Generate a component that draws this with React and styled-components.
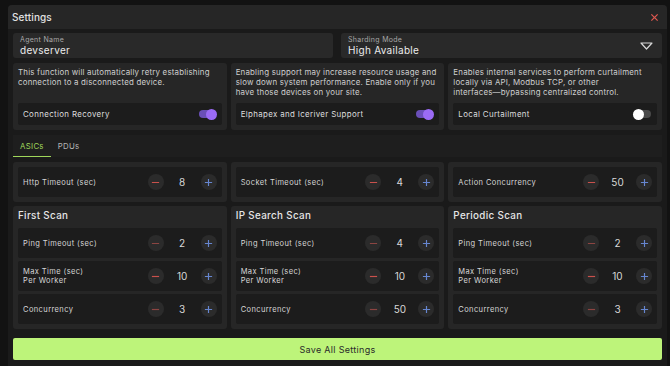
import styled, { createGlobalStyle } from 'styled-components'

const GlobalStyle = createGlobalStyle`
    html, body {
        margin: 0;
        padding: 0;
        background: #121212;
        font-family: Inter, "Noto Sans", "Liberation Sans", sans-serif;
        -webkit-font-smoothing: antialiased;
    }
`

const infoCards = [
    {
        text: 'This function will automatically retry establishing connection to a disconnected device.',
        label: 'Connection Recovery',
        on: true,
    },
    {
        text: 'Enabling support may increase resource usage and slow down system performance. Enable only if you have those devices on your site.',
        label: 'Elphapex and Iceriver Support',
        on: true,
    },
    {
        text: 'Enables internal services to perform curtailment locally via API, Modbus TCP, or other interfaces\u2060\u2014\u2060bypassing centralized control.',
        label: 'Local Curtailment',
        on: false,
    },
]

const topSteppers = [
    { label: 'Http Timeout (sec)', value: 8 },
    { label: 'Socket Timeout (sec)', value: 4 },
    { label: 'Action Concurrency', value: 50 },
]

const scans = [
    { title: 'First Scan', values: [2, 10, 3] },
    { title: 'IP Search Scan', values: [4, 10, 50] },
    { title: 'Periodic Scan', values: [2, 10, 3] },
]

const Stepper = ({ label, value, dim }) => (
    <StepRow>
        <StepLabel>{label}</StepLabel>
        <StepControls>
            <RoundBtn $minus $dim={dim}>
                <svg width="9" height="9" viewBox="0 0 10 10">
                    <path d="M1 5h8" stroke="currentColor" strokeWidth="1.3" />
                </svg>
            </RoundBtn>
            <StepValue>{value}</StepValue>
            <RoundBtn>
                <svg width="9" height="9" viewBox="0 0 10 10">
                    <path d="M1 5h8M5 1v8" stroke="currentColor" strokeWidth="1.3" />
                </svg>
            </RoundBtn>
        </StepControls>
    </StepRow>
)

const App = () => {
    return (
        <Page>
            <GlobalStyle />
            <Dialog>
                <Header>
                    <Title>Settings</Title>
                    <Close>
                        <svg width="9" height="9" viewBox="0 0 10 10">
                            <path d="M1.5 1.5l7 7M8.5 1.5l-7 7" stroke="currentColor" strokeWidth="1.4" />
                        </svg>
                    </Close>
                </Header>
                <Body>
                    <FieldGrid>
                        <Field>
                            <FieldLabel>Agent Name</FieldLabel>
                            <FieldValue>devserver</FieldValue>
                        </Field>
                        <Field>
                            <FieldLabel>Sharding Mode</FieldLabel>
                            <FieldValue>High Available</FieldValue>
                            <Caret width="13" height="8" viewBox="0 0 13 8">
                                <path d="M1 1h11L6.5 7z" fill="none" stroke="#d8d8d8" strokeWidth="1.2" strokeLinejoin="round" />
                            </Caret>
                        </Field>
                    </FieldGrid>

                    <Columns>
                        {infoCards.map((c) => (
                            <InfoCard key={c.label}>
                                <InfoText>{c.text}</InfoText>
                                <ToggleRow>
                                    <ToggleLabel>{c.label}</ToggleLabel>
                                    <Track $on={c.on}>
                                        <Knob $on={c.on} />
                                    </Track>
                                </ToggleRow>
                            </InfoCard>
                        ))}
                    </Columns>

                    <Tabs>
                        <Tab $active>ASICs</Tab>
                        <Tab>PDUs</Tab>
                    </Tabs>

                    <Columns>
                        {topSteppers.map((s) => (
                            <Card key={s.label}>
                                <Stepper label={s.label} value={s.value} />
                            </Card>
                        ))}
                    </Columns>

                    <Columns>
                        {scans.map((s) => (
                            <Card key={s.title} $section>
                                <CardTitle>{s.title}</CardTitle>
                                <Stepper label="Ping Timeout (sec)" value={s.values[0]} dim />
                                <Stepper
                                    label={
                                        <>
                                            Max Time (sec)
                                            <br />
                                            Per Worker
                                        </>
                                    }
                                    value={s.values[1]}
                                />
                                <Stepper label="Concurrency" value={s.values[2]} dim />
                            </Card>
                        ))}
                    </Columns>

                    <SaveButton>Save All Settings</SaveButton>
                </Body>
            </Dialog>
        </Page>
    )
}

const Page = styled.div`
    width: 670px;
    height: 366px;
    overflow: hidden;
    box-sizing: border-box;
    padding: 5px 3px 0 8px;
    background: #121212;
`

const Dialog = styled.div`
    width: 659px;
    background: #1a1a1a;
    border-radius: 4px 4px 0 0;
    overflow: hidden;
`

const Header = styled.div`
    height: 24px;
    background: #262626;
    display: flex;
    align-items: center;
    justify-content: space-between;
    padding: 0 8px 0 4px;
`

const Title = styled.div`
    color: #e2e2e2;
    font-size: 10px;
    font-weight: 500;
    letter-spacing: 0.1px;
`

const Close = styled.div`
    color: #d9574f;
    display: flex;
`

const Body = styled.div`
    padding: 4px 5px 10px;
    display: flex;
    flex-direction: column;
`

const FieldGrid = styled.div`
    display: grid;
    grid-template-columns: 320px 1fr;
    gap: 8px;
`

const Field = styled.div`
    position: relative;
    height: 25px;
    box-sizing: border-box;
    background: #292929;
    border-radius: 3px;
    padding: 3px 7px 0;
`

const FieldLabel = styled.div`
    font-size: 7px;
    color: #a8a8a8;
    line-height: 8px;
    letter-spacing: 0.3px;
`

const FieldValue = styled.div`
    font-size: 10px;
    color: #ececec;
    line-height: 12px;
    letter-spacing: 0.3px;
`

const Caret = styled.svg`
    position: absolute;
    right: 9px;
    top: 9px;
`

const Columns = styled.div`
    display: grid;
    grid-template-columns: repeat(3, 1fr);
    gap: 4px;
    margin-top: 5px;

    & + & {
        margin-top: 4px;
    }
`

const InfoCard = styled.div`
    height: 67px;
    box-sizing: border-box;
    background: #262626;
    border-radius: 3px;
    padding: 4px 5px 5px;
    display: flex;
    flex-direction: column;
    justify-content: space-between;
`

const InfoText = styled.div`
    font-size: 7.9px;
    line-height: 10px;
    color: #cfcfcf;
    letter-spacing: 0.2px;
`

const ToggleRow = styled.div`
    height: 22px;
    background: #1c1c1c;
    border-radius: 2px;
    display: flex;
    align-items: center;
    justify-content: space-between;
    padding: 0 6px 0 5px;
`

const ToggleLabel = styled.div`
    font-size: 7.9px;
    color: #dedede;
    letter-spacing: 0.35px;
`

const Track = styled.div`
    position: relative;
    width: 17px;
    height: 8px;
    border-radius: 4px;
    background: ${(p) => (p.$on ? '#6a4fb8' : '#4a4a4a')};
`

const Knob = styled.div`
    position: absolute;
    top: -1.5px;
    ${(p) => (p.$on ? 'right: -1px;' : 'left: -1px;')}
    width: 11px;
    height: 11px;
    border-radius: 50%;
    background: ${(p) => (p.$on ? '#9b6bf5' : '#ffffff')};
`

const Tabs = styled.div`
    margin-top: 5px;
    height: 22px;
    background: #1e1e1e;
    display: flex;
    align-items: stretch;
`

const Tab = styled.div`
    padding: 1px 7px 0;
    display: flex;
    align-items: center;
    font-size: 7.8px;
    letter-spacing: 0.3px;
    color: ${(p) => (p.$active ? '#9fd65a' : '#b4b4b4')};
    border-bottom: 1.5px solid ${(p) => (p.$active ? '#9fd65a' : 'transparent')};
`

const Card = styled.div`
    background: #262626;
    border-radius: 3px;
    padding: ${(p) => (p.$section ? '2px 5px 5px' : '5px')};
    display: flex;
    flex-direction: column;
    gap: 3px;
`

const CardTitle = styled.div`
    height: 14px;
    margin-bottom: 3px;
    display: flex;
    align-items: center;
    font-size: 9.8px;
    font-weight: 500;
    color: #e6e6e6;
    letter-spacing: 0.35px;
`

const StepRow = styled.div`
    height: 30px;
    box-sizing: border-box;
    background: #1c1c1c;
    border-radius: 2px;
    display: flex;
    align-items: center;
    justify-content: space-between;
    padding: 0 5px;
`

const StepLabel = styled.div`
    font-size: 7.5px;
    line-height: 9px;
    color: #d6d6d6;
    letter-spacing: 0.4px;
`

const StepControls = styled.div`
    display: flex;
    align-items: center;
`

const RoundBtn = styled.div`
    width: 16px;
    height: 16px;
    border-radius: 50%;
    background: #2b2b2b;
    display: flex;
    align-items: center;
    justify-content: center;
    color: ${(p) => (p.$minus ? (p.$dim ? '#8c4542' : '#c9514c') : '#6686d0')};
`

const StepValue = styled.div`
    width: 37px;
    text-align: center;
    font-size: 10px;
    color: #d8d8d8;
`

const SaveButton = styled.div`
    margin-top: 9px;
    height: 22px;
    border-radius: 2px;
    background: #bdf47a;
    display: flex;
    align-items: center;
    justify-content: center;
    font-size: 9px;
    color: #2a2a2a;
    letter-spacing: 0.3px;
`

export default App
